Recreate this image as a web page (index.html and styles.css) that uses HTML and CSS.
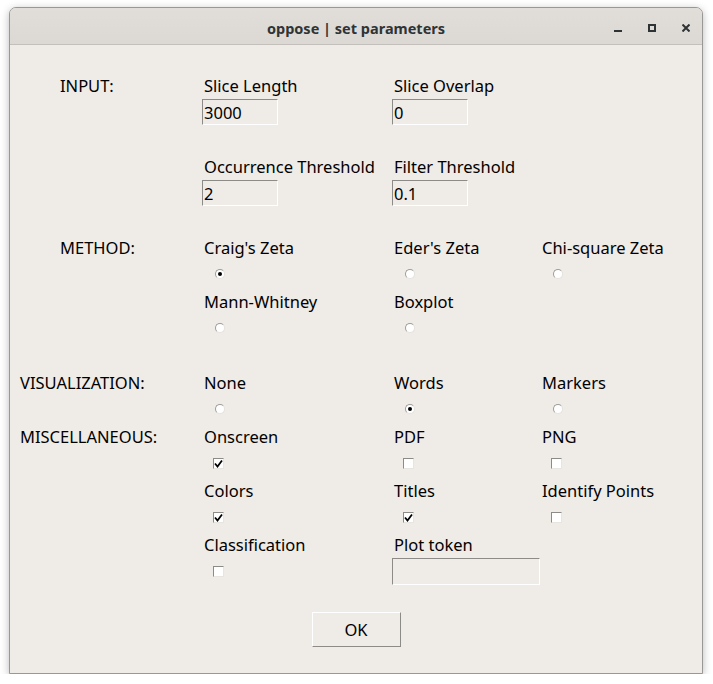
FILE: index.html
```html
<!DOCTYPE html>
<html>
<head>
<meta charset="utf-8">
<title>oppose | set parameters</title>
<link rel="stylesheet" href="styles.css">
</head>
<body>
<div class="window">
  <div class="titlebar">
    <div></div>
    <div class="title">oppose | set parameters</div>
    <div class="controls">
      <svg class="wbtn" width="8" height="8" viewBox="0 0 8 8"><path d="M0 7 H8" stroke="#2e3436" stroke-width="2"/></svg>
      <svg class="wbtn" width="8" height="8" viewBox="0 0 8 8"><rect x="1" y="1" width="6" height="6" fill="none" stroke="#2e3436" stroke-width="2"/></svg>
      <svg class="wbtn" width="8" height="8" viewBox="0 0 8 8"><path d="M0.5 0.5 L7.5 7.5 M7.5 0.5 L0.5 7.5" stroke="#2e3436" stroke-width="2"/></svg>
    </div>
  </div>
  <div class="content">
    <div class="form">
      <div class="row l"><div class="sect ind">INPUT:</div><div class="lbl">Slice Length</div><div class="lbl">Slice Overlap</div><div></div></div>
      <div class="row c"><div></div><div><div class="entry">3000</div></div><div><div class="entry">0</div></div><div></div></div>
      <div class="row l gap"><div></div><div class="lbl">Occurrence Threshold</div><div class="lbl">Filter Threshold</div><div></div></div>
      <div class="row c"><div></div><div><div class="entry">2</div></div><div><div class="entry">0.1</div></div><div></div></div>

      <div class="row l gap"><div class="sect ind">METHOD:</div><div class="lbl">Craig's Zeta</div><div class="lbl">Eder's Zeta</div><div class="lbl">Chi-square Zeta</div></div>
      <div class="row c"><div></div><div><span class="radio on"></span></div><div><span class="radio"></span></div><div><span class="radio"></span></div></div>
      <div class="row l"><div></div><div class="lbl">Mann-Whitney</div><div class="lbl">Boxplot</div><div></div></div>
      <div class="row c"><div></div><div><span class="radio"></span></div><div><span class="radio"></span></div><div></div></div>

      <div class="row l gap"><div class="sect">VISUALIZATION:</div><div class="lbl">None</div><div class="lbl">Words</div><div class="lbl">Markers</div></div>
      <div class="row c"><div></div><div><span class="radio"></span></div><div><span class="radio on"></span></div><div><span class="radio"></span></div></div>

      <div class="row l"><div class="sect">MISCELLANEOUS:</div><div class="lbl">Onscreen</div><div class="lbl">PDF</div><div class="lbl">PNG</div></div>
      <div class="row c"><div></div>
        <div><span class="check"><svg width="9" height="9" viewBox="0 0 9 9"><path d="M1 4.5 L3.5 7.5 L8 1.5" fill="none" stroke="#000" stroke-width="1.8"/></svg></span></div>
        <div><span class="check"></span></div>
        <div><span class="check"></span></div>
      </div>
      <div class="row l"><div></div><div class="lbl">Colors</div><div class="lbl">Titles</div><div class="lbl">Identify Points</div></div>
      <div class="row c"><div></div>
        <div><span class="check"><svg width="9" height="9" viewBox="0 0 9 9"><path d="M1 4.5 L3.5 7.5 L8 1.5" fill="none" stroke="#000" stroke-width="1.8"/></svg></span></div>
        <div><span class="check"><svg width="9" height="9" viewBox="0 0 9 9"><path d="M1 4.5 L3.5 7.5 L8 1.5" fill="none" stroke="#000" stroke-width="1.8"/></svg></span></div>
        <div><span class="check"></span></div>
      </div>
      <div class="row l"><div></div><div class="lbl">Classification</div><div class="lbl">Plot token</div><div></div></div>
      <div class="row c"><div></div><div><span class="check"></span></div><div class="span2"><div class="entry wide"></div></div></div>
    </div>
    <div class="actions"><button class="btn">OK</button></div>
  </div>
</div>
</body>
</html>
```

FILE: styles.css
```css
html, body {
  margin: 0;
  padding: 0;
  background: #ffffff;
}

body {
  font-family: "Noto Sans", "Open Sans", sans-serif;
  font-size: 16.5px;
  color: #000;
}

.window {
  margin: 7px 0 0 9px;
  width: 694px;
  height: 667px;
  box-sizing: border-box;
  border: 1px solid #9a9896;
  border-radius: 7px 7px 0 0;
  background: #efebe7;
  box-shadow: 0 2px 9px rgba(0, 0, 0, 0.28);
  display: flex;
  flex-direction: column;
  overflow: hidden;
}

.titlebar {
  height: 36px;
  border-bottom: 1px solid #c3bfbb;
  background: linear-gradient(#e1ddd9, #dcd8d3);
  display: grid;
  grid-template-columns: 1fr auto 1fr;
  align-items: center;
}

.title {
  font-weight: bold;
  font-size: 14.5px;
  color: #2e3436;
  padding-top: 3px;
}

.controls {
  display: flex;
  justify-content: flex-end;
  align-items: center;
  gap: 26px;
  padding-right: 12px;
  padding-top: 4px;
}

.wbtn {
  display: block;
}

.content {
  flex: 1;
  display: flex;
  flex-direction: column;
}

.form {
  display: flex;
  flex-direction: column;
  padding-top: 27px;
}

.row {
  display: grid;
  grid-template-columns: 192px 190px 148px 1fr;
  align-items: center;
}

.row.l {
  height: 26px;
}

.row.c {
  height: 28px;
}

.row.gap {
  margin-top: 27px;
}

.sect {
  padding-left: 10px;
  padding-top: 1px;
  white-space: nowrap;
  line-height: 26px;
}

.sect.ind {
  padding-left: 50px;
}

.lbl {
  padding-left: 2px;
  padding-top: 1px;
  white-space: nowrap;
  line-height: 26px;
}

.span2 {
  grid-column: span 2;
}

.entry {
  width: 76px;
  height: 26px;
  box-sizing: border-box;
  border-top: 1px solid #8d8b88;
  border-left: 1px solid #8d8b88;
  border-right: 1px solid #ffffff;
  border-bottom: 1px solid #ffffff;
  background: #efebe7;
  padding-left: 1px;
  line-height: 25px;
}

.entry.wide {
  width: 148px;
  height: 27px;
}

.radio {
  display: block;
  width: 10px;
  height: 10px;
  margin-left: 13px;
  box-sizing: border-box;
  border-radius: 50%;
  background: #ffffff;
  border: 1px solid;
  border-color: #9e9c99 #e4e1dd #e4e1dd #9e9c99;
  position: relative;
}

.radio.on::after {
  content: "";
  position: absolute;
  left: 2px;
  top: 2px;
  width: 4px;
  height: 4px;
  border-radius: 50%;
  background: #000;
}

.check {
  display: flex;
  align-items: center;
  justify-content: center;
  width: 11px;
  height: 11px;
  margin-left: 11px;
  box-sizing: border-box;
  background: #ffffff;
  border-top: 1px solid #8d8b88;
  border-left: 1px solid #8d8b88;
  border-right: 1px solid #e8e5e1;
  border-bottom: 1px solid #e8e5e1;
}

.check svg {
  display: block;
}

.actions {
  display: flex;
  justify-content: center;
  margin-top: 27px;
}

.btn {
  width: 89px;
  height: 35px;
  box-sizing: border-box;
  font-family: "Noto Sans", "Open Sans", sans-serif;
  font-size: 16.5px;
  color: #000;
  background: #efebe7;
  border-top: 1px solid #ffffff;
  border-left: 1px solid #ffffff;
  border-right: 1px solid #8d8b88;
  border-bottom: 1px solid #8d8b88;
  padding: 0;
}
```
